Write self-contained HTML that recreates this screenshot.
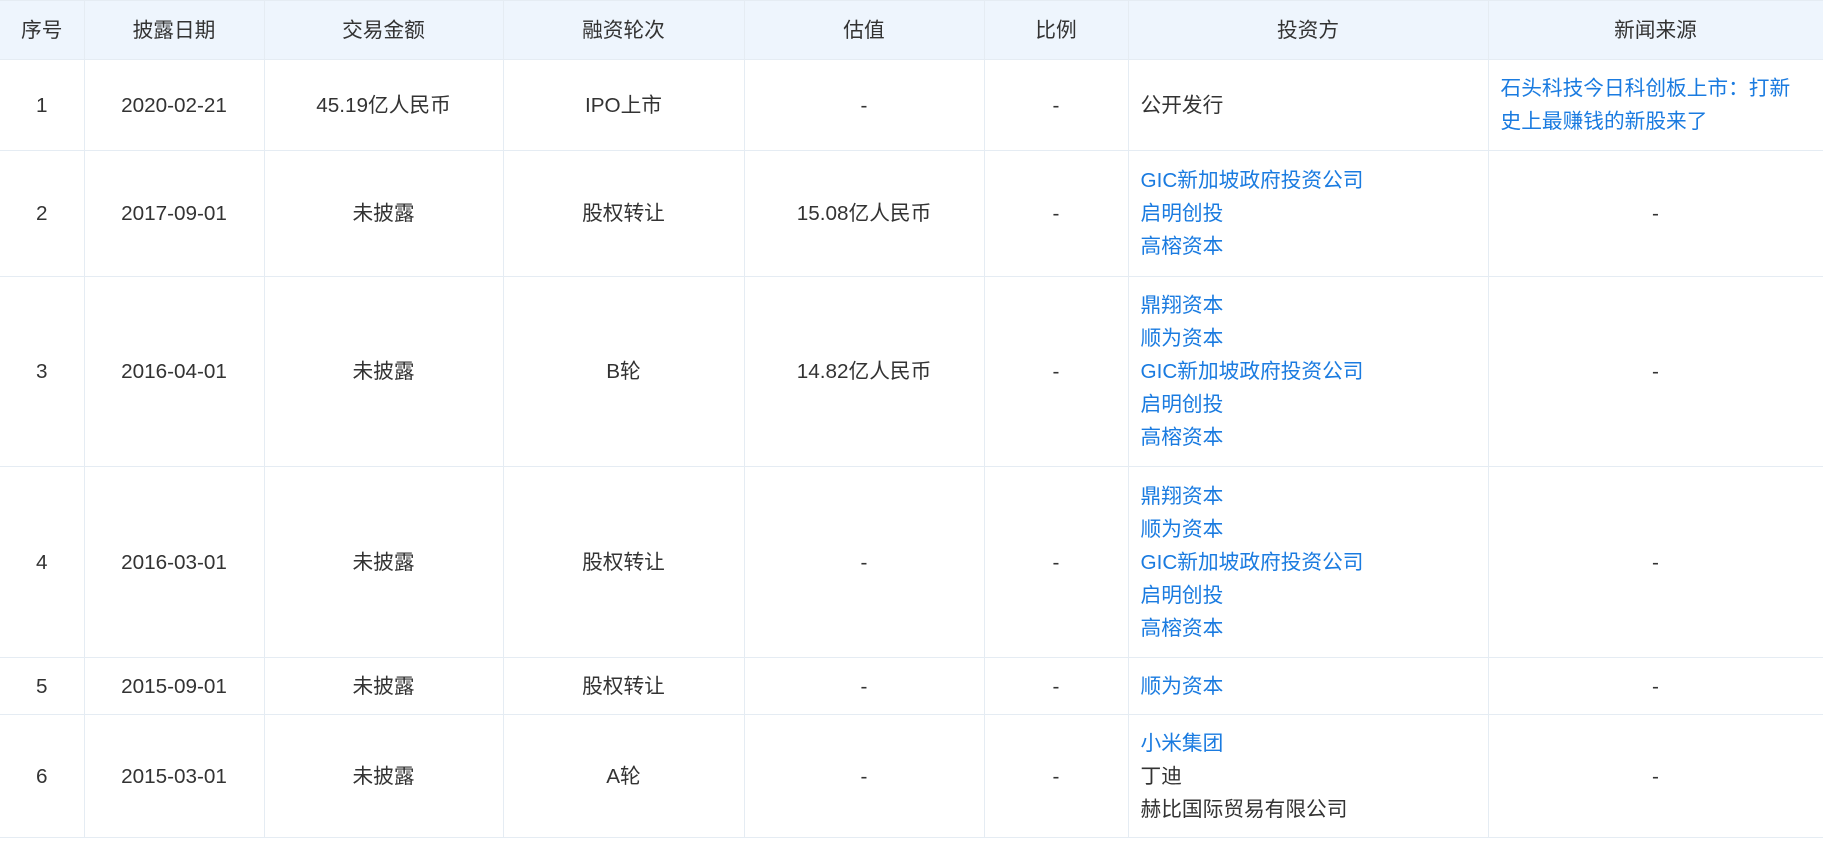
<!DOCTYPE html>
<html><head><meta charset="utf-8"><style>
html,body{margin:0;padding:0;background:#fff;width:1823px;height:844px;overflow:hidden}
table{border-collapse:collapse;table-layout:fixed;width:1823px;font-family:"Liberation Sans","Noto Sans CJK SC",sans-serif;font-size:20.7px;color:#333}
td,th{border:1px solid #e5ecf3;text-align:center;vertical-align:middle;line-height:33px;padding:0 12px;font-weight:normal}
th{background:#eef5fd;height:58px}
td.l{text-align:left}
td.n{padding-right:22px}
a{color:#1a7be0;text-decoration:none;display:block}
tr>*:first-child{border-left:none}
</style></head><body>
<table>
<colgroup><col style="width:84px"><col style="width:180px"><col style="width:239px"><col style="width:241px"><col style="width:240px"><col style="width:144px"><col style="width:360px"><col style="width:335px"></colgroup>
<tr><th>序号</th><th>披露日期</th><th>交易金额</th><th>融资轮次</th><th>估值</th><th>比例</th><th>投资方</th><th>新闻来源</th></tr>
<tr style="height:91px"><td>1</td><td>2020-02-21</td><td>45.19亿人民币</td><td>IPO上市</td><td>-</td><td>-</td><td class="l">公开发行</td><td class="l n"><a>石头科技今日科创板上市：打新史上最赚钱的新股来了</a></td></tr>
<tr style="height:126px"><td>2</td><td>2017-09-01</td><td>未披露</td><td>股权转让</td><td>15.08亿人民币</td><td>-</td><td class="l"><a>GIC新加坡政府投资公司</a><a>启明创投</a><a>高榕资本</a></td><td>-</td></tr>
<tr style="height:190px"><td>3</td><td>2016-04-01</td><td>未披露</td><td>B轮</td><td>14.82亿人民币</td><td>-</td><td class="l"><a>鼎翔资本</a><a>顺为资本</a><a>GIC新加坡政府投资公司</a><a>启明创投</a><a>高榕资本</a></td><td>-</td></tr>
<tr style="height:191px"><td>4</td><td>2016-03-01</td><td>未披露</td><td>股权转让</td><td>-</td><td>-</td><td class="l"><a>鼎翔资本</a><a>顺为资本</a><a>GIC新加坡政府投资公司</a><a>启明创投</a><a>高榕资本</a></td><td>-</td></tr>
<tr style="height:57px"><td>5</td><td>2015-09-01</td><td>未披露</td><td>股权转让</td><td>-</td><td>-</td><td class="l"><a>顺为资本</a></td><td>-</td></tr>
<tr style="height:123px"><td>6</td><td>2015-03-01</td><td>未披露</td><td>A轮</td><td>-</td><td>-</td><td class="l"><a>小米集团</a>丁迪<br>赫比国际贸易有限公司</td><td>-</td></tr>
</table>
</body></html>
